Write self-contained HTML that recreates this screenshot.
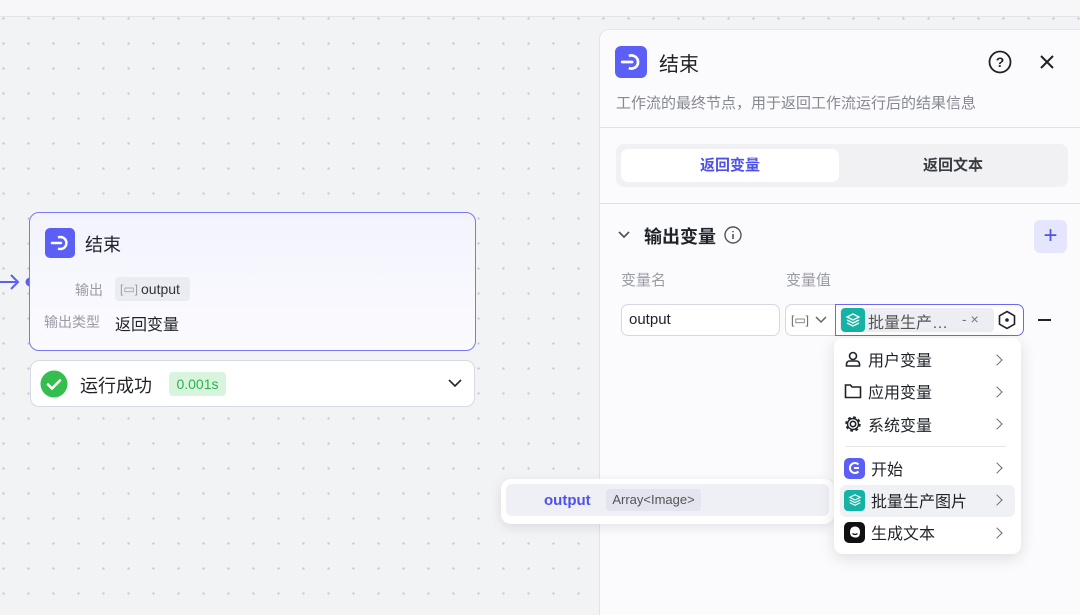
<!DOCTYPE html>
<html><head><meta charset="utf-8"><style>
*{box-sizing:border-box;margin:0;padding:0}
body{width:1080px;height:615px;overflow:hidden;position:relative;font-family:"Liberation Sans","Noto Sans CJK SC",sans-serif;background:#f2f3f5;color:#1f2329}
.grid{position:absolute;left:0;top:17px;width:1080px;height:598px;background-image:radial-gradient(circle,#c4c6cc 1px,transparent 1.3px);background-size:25px 25px;background-position:-9px -11px}
.topbar{position:absolute;left:0;top:0;width:1080px;height:17px;background:#f7f7f9;border-bottom:1px solid #e3e4e8}
.abs{position:absolute}
.ico{background:#5b5ff5;border-radius:5px;display:flex;align-items:center;justify-content:center}
.node{left:29px;top:212px;width:447px;height:139px;border:1.5px solid #7a77f5;border-radius:10px;background:linear-gradient(#f3f3fd,#fbfbfe)}
.run{left:30px;top:360px;width:445px;height:47px;border:1px solid #d8dae3;border-radius:9px;background:#fff}
.panel{left:599px;top:29px;width:481px;height:586px;background:#fbfbfd;border-left:1px solid #e1e2ea;border-top:1px solid #e6e7ee;border-top-left-radius:10px}
.menu{left:834px;top:338px;width:187px;height:216px;background:#fff;border-radius:9px;box-shadow:0 4px 16px rgba(0,0,0,.12)}
.mi{position:absolute;left:10px;font-size:16px;display:flex;align-items:center;gap:6px;color:#1f2329}
.chev{position:absolute;right:20px;width:8px;height:8px;border-right:1.5px solid #6a6d76;border-top:1.5px solid #6a6d76;transform:rotate(45deg)}
.teal{background:#14b3a6;border-radius:4px;display:flex;align-items:center;justify-content:center}
</style></head><body>
<div class="topbar"></div>
<div class="grid"></div>

<svg class="abs" style="left:0;top:273px" width="36" height="18"><path d="M0 9H18M11 2l7 7-7 7" stroke="#5b5ff5" stroke-width="2" fill="none"/><circle cx="30" cy="9" r="4.5" fill="#5b5ff5"/></svg>

<div class="abs node">
 <div class="abs ico" style="left:15px;top:15px;width:30px;height:30px"><svg width="20" height="20" viewBox="0 0 20 20"><path d="M2 10H11" stroke="#fff" stroke-width="2.5" stroke-linecap="round"/><path d="M8 4.5A6 6 0 1 1 8 15.5" stroke="#fff" stroke-width="2.5" fill="none"/></svg></div>
 <div class="abs" style="left:55px;top:18px;font-size:18px;color:#1f2329">结束</div>
 <div class="abs" style="left:45px;top:67px;font-size:14px;color:#9a9ca6">输出</div>
 <div class="abs" style="left:85px;top:64px;height:24px;width:75px;background:#ebecf3;border-radius:4px;font-size:14px;display:flex;align-items:center;padding-left:5px;color:#333"><span style="color:#999;font-size:12px;margin-right:3px">[▭]</span>output</div>
 <div class="abs" style="left:14px;top:99px;font-size:14px;color:#9a9ca6">输出类型</div>
 <div class="abs" style="left:85px;top:98px;font-size:16px;color:#1f2329">返回变量</div>
</div>

<div class="abs run">
 <svg class="abs" style="left:9px;top:9px" width="28" height="28"><circle cx="14" cy="14" r="13.5" fill="#35bd4f"/><path d="M8 14.5l4 4 8-8" stroke="#fff" stroke-width="2.5" fill="none" stroke-linecap="round"/></svg>
 <div class="abs" style="left:49px;top:11px;font-size:18px;color:#1f2329">运行成功</div>
 <div class="abs" style="left:138px;top:11px;height:24px;width:57px;background:#d9f4de;border-radius:4px;color:#2fb24b;font-size:14px;text-align:center;line-height:24px">0.001s</div>
 <svg class="abs" style="left:417px;top:17px" width="14" height="10"><path d="M1 2l6 6 6-6" stroke="#1f2329" stroke-width="1.6" fill="none"/></svg>
</div>

<div class="abs panel">
 <div class="abs ico" style="left:15px;top:16px;width:32px;height:32px;border-radius:6px"><svg width="22" height="22" viewBox="0 0 20 20"><path d="M2 10H11" stroke="#fff" stroke-width="2.5" stroke-linecap="round"/><path d="M8 4.5A6 6 0 1 1 8 15.5" stroke="#fff" stroke-width="2.5" fill="none"/></svg></div>
 <div class="abs" style="left:59px;top:18px;font-size:20px;color:#1f2329">结束</div>
 <svg class="abs" style="left:388px;top:20px" width="24" height="24"><circle cx="12" cy="12" r="10.5" stroke="#1f2329" stroke-width="1.8" fill="none"/><text x="12" y="17" font-size="14" text-anchor="middle" font-family="Liberation Sans" font-weight="bold" fill="#1f2329">?</text></svg>
 <svg class="abs" style="left:439px;top:24px" width="16" height="16"><path d="M2 2l12 12M14 2L2 14" stroke="#1f2329" stroke-width="2"/></svg>
 <div class="abs" style="left:16px;top:62px;font-size:15px;color:#868892">工作流的最终节点，用于返回工作流运行后的结果信息</div>
 <div class="abs" style="left:0;top:97px;width:481px;height:1px;background:#dfe0e8"></div>
 <div class="abs" style="left:16px;top:114px;width:452px;height:43px;background:#f1f1f4;border-radius:8px"></div>
 <div class="abs" style="left:21px;top:119px;width:218px;height:33px;background:#fff;border-radius:7px;text-align:center;line-height:33px;font-size:15px;color:#4d53e8;font-weight:bold">返回变量</div>
 <div class="abs" style="left:243px;top:119px;width:220px;height:33px;text-align:center;line-height:33px;font-size:15px;color:#3a3c44;font-weight:bold">返回文本</div>
 <div class="abs" style="left:0;top:173px;width:481px;height:1px;background:#dfe0e8"></div>
 <svg class="abs" style="left:17px;top:200px" width="14" height="10"><path d="M2 2l5 5 5-5" stroke="#555" stroke-width="1.7" fill="none"/></svg>
 <div class="abs" style="left:44px;top:193px;font-size:18px;color:#1f2329;font-weight:bold">输出变量</div>
 <svg class="abs" style="left:124px;top:196px" width="18" height="18"><circle cx="9" cy="9" r="8" stroke="#555" stroke-width="1.4" fill="none"/><path d="M9 8v5M9 5v1.3" stroke="#555" stroke-width="1.6"/></svg>
 <div class="abs" style="left:434px;top:190px;width:33px;height:33px;background:#e5e6fd;border-radius:6px;color:#4d53e8;font-size:24px;text-align:center;line-height:31px">+</div>
 <div class="abs" style="left:21px;top:239px;font-size:15px;color:#9a9ca6">变量名</div>
 <div class="abs" style="left:186px;top:239px;font-size:15px;color:#9a9ca6">变量值</div>
 <div class="abs" style="left:21px;top:274px;width:159px;height:32px;border:1px solid #d5d7e2;border-radius:7px;background:#fff;font-size:15px;line-height:30px;padding-left:7px;color:#1f2329">output</div>
 <div class="abs" style="left:185px;top:274px;width:60px;height:32px;border:1px solid #d5d7e2;border-radius:7px 0 0 7px;background:#fff;font-size:12px;color:#666;line-height:30px;padding-left:5px">[▭]<svg style="margin-left:6px" width="12" height="8"><path d="M1 1l5 5 5-5" stroke="#666" stroke-width="1.5" fill="none"/></svg></div>
 <div class="abs" style="left:235px;top:274px;width:189px;height:32px;border:1.5px solid #6c67f5;border-radius:0 7px 7px 0;background:#fff"></div>
 <div class="abs" style="left:240px;top:278px;width:154px;height:24px;background:#eceef4;border-radius:4px"></div>
 <div class="abs teal" style="left:241px;top:278px;width:24px;height:24px"><svg width="16" height="16" viewBox="0 0 16 16"><path d="M8 2l6 3-6 3-6-3z M2 8l6 3 6-3 M2 11l6 3 6-3" stroke="#fff" stroke-width="1.3" fill="none"/></svg></div>
 <div class="abs" style="left:268px;top:279px;font-size:16px;color:#555">批量生产…</div>
 <div class="abs" style="left:362px;top:281px;font-size:14px;color:#777">- ×</div>
 <svg class="abs" style="left:397px;top:280px" width="20" height="20"><path d="M10 1.5l7.5 4.3v8.4L10 18.5 2.5 14.2V5.8z" stroke="#1f2329" stroke-width="1.6" fill="none"/><circle cx="10" cy="10" r="1.8" fill="#1f2329"/></svg>
 <div class="abs" style="left:438px;top:289px;width:13px;height:1.6px;background:#1f2329"></div>
</div>

<div class="abs" style="left:501px;top:479px;width:333px;height:45px;background:#fff;border-radius:10px;box-shadow:0 3px 12px rgba(0,0,0,.1)">
 <div class="abs" style="left:5px;top:5px;width:323px;height:32px;background:#eff0f5;border-radius:6px"></div>
 <div class="abs" style="left:43px;top:13px;font-size:15px;color:#4d53e8;font-weight:bold">output</div>
 <div class="abs" style="left:105px;top:10px;height:22px;width:95px;background:#e3e4ed;border-radius:4px;font-size:13px;color:#555;text-align:center;line-height:22px">Array&lt;Image&gt;</div>
</div>

<div class="abs menu">
 <div class="mi" style="top:9px"><svg width="18" height="18"><circle cx="9" cy="6" r="3.5" stroke="#1f2329" stroke-width="1.6" fill="none"/><path d="M2.5 16v-2a3 3 0 013-3h7a3 3 0 013 3v2z" stroke="#1f2329" stroke-width="1.6" fill="none"/></svg>用户变量</div><div class="chev" style="top:18px"></div>
 <div class="mi" style="top:41px"><svg width="18" height="18"><path d="M1.5 3h5l1.5 2h8.5v10.5h-15z" stroke="#1f2329" stroke-width="1.6" fill="none"/></svg>应用变量</div><div class="chev" style="top:50px"></div>
 <div class="mi" style="top:74px"><svg width="18" height="18"><circle cx="9" cy="9" r="2.7" stroke="#1f2329" stroke-width="1.6" fill="none"/><circle cx="9" cy="9" r="6.5" stroke="#1f2329" stroke-width="2.5" stroke-dasharray="2.6 2.5" fill="none"/><circle cx="9" cy="9" r="5.5" stroke="#1f2329" stroke-width="1.4" fill="none"/></svg>系统变量</div><div class="chev" style="top:82px"></div>
 <div class="abs" style="left:12px;top:108px;width:160px;height:1px;background:#e4e5ea"></div>
 <div class="abs" style="left:6px;top:147px;width:175px;height:32px;background:#f0f1f5;border-radius:6px"></div>
 <div class="mi" style="top:118px"><div class="ico" style="width:21px;height:21px"><svg width="14" height="14" viewBox="0 0 14 14"><path d="M10.5 3.5A5 5 0 1 0 10.5 10.5" stroke="#fff" stroke-width="2" fill="none"/><path d="M6 7h5" stroke="#fff" stroke-width="2"/></svg></div>开始</div><div class="chev" style="top:126px"></div>
 <div class="mi" style="top:150px"><div class="teal" style="width:21px;height:21px"><svg width="14" height="14" viewBox="0 0 16 16"><path d="M8 2l6 3-6 3-6-3z M2 8l6 3 6-3 M2 11l6 3 6-3" stroke="#fff" stroke-width="1.4" fill="none"/></svg></div>批量生产图片</div><div class="chev" style="top:158px"></div>
 <div class="mi" style="top:182px"><div style="width:21px;height:21px;background:#111;border-radius:5px;display:flex;align-items:center;justify-content:center"><svg width="14" height="14"><path d="M7 1.5C3.5 1.5 2 4 2 7s1 5 5 5.5 5-2.5 5-5.5-1.5-5.5-5-5.5z" fill="#fff"/><path d="M4.5 8.5q2.5 2 5 0" stroke="#111" stroke-width="1.2" fill="none"/></svg></div>生成文本</div><div class="chev" style="top:191px"></div>
</div>
</body></html>
